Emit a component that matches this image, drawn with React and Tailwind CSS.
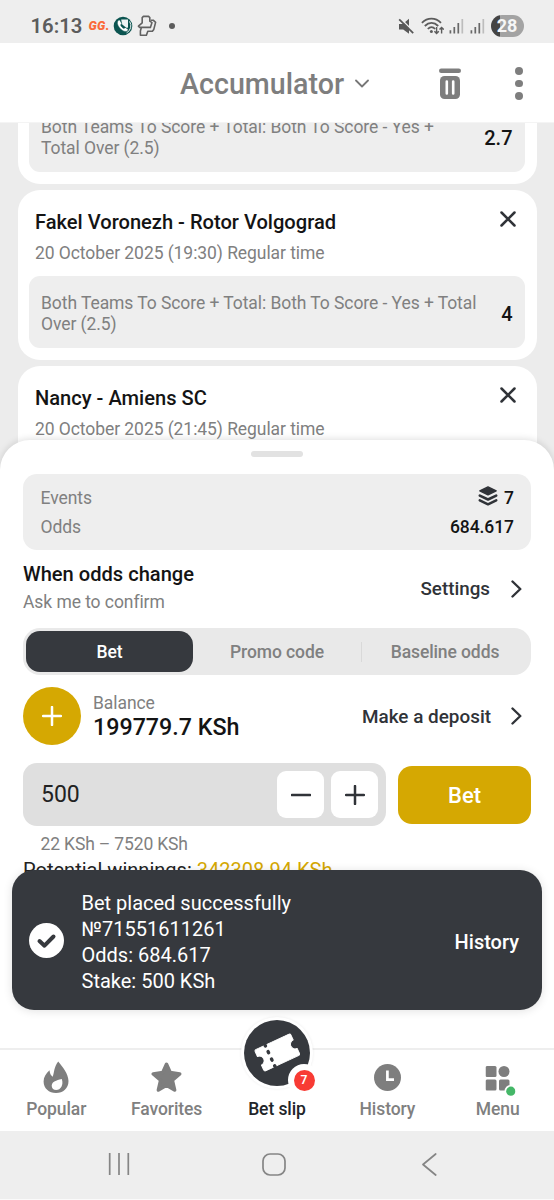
import React from "react";

function StatusBar() {
  return (
    <div className="flex h-[43px] shrink-0 items-center bg-[#eeeeee] pt-[9px] pl-[30.5px] pr-[30.5px] text-[#5c5c5c]">
      <span className="w-[50px] text-[20.3px] leading-6 font-semibold whitespace-nowrap">16:13</span>
      <span className="ml-[8px] w-[21.5px] text-[12.5px] leading-6 font-black italic tracking-[0.3px] whitespace-nowrap text-[#fa6a3a]">GG.</span>
      <svg className="ml-[3px] size-[20px]" viewBox="0 0 20 20">
        <circle cx="10" cy="10" r="9.3" fill="#0b5450" />
        <path d="M8.2 3.6H15V11.6L13.6 12L9 8.2Z" fill="#eef4f4" />
        <path d="M16.6 5.4A8 8 0 0 1 13.6 16.8" fill="none" stroke="#eef4f4" strokeWidth="1" />
        <path d="M5.2 4.6C3.8 6 4.1 8.5 6.1 11.2C8.3 14.2 11.3 16.1 13.9 15.2C14.8 14.8 15.4 13.9 15 13.3L12.7 11.7C12.1 11.4 11.5 12.2 10.9 12.5C9.5 12 7.9 10.2 7.6 8.9C8 8.3 8.8 8 8.6 7.2L7 4.5C6.5 3.9 5.7 4 5.2 4.6Z" fill="#fff" stroke="#0b5450" strokeWidth=".5" />
      </svg>
      <svg className="ml-[4px] h-[22px] w-[20px]" viewBox="0 0 20 22" fill="none" stroke="#626262" strokeWidth="1.6" strokeLinejoin="round" strokeLinecap="round">
        <path d="M6.4 1.4H11.6L12.8 2.6V6.2L15 7.6L13.4 12.4H2.6L1.4 11.2L5.2 7.8V2.6Z" />
        <path d="M14.2 5.2H16.2L18.6 7.4L16.8 14.4L15.4 16.2H10.8L9.4 20.2H3.4V16L4.2 13" />
      </svg>
      <span className="ml-[11.5px] size-[6px] rounded-full bg-[#5c5c5c]" />
      <div className="ml-auto flex items-center">
        <svg className="h-[17px] w-[16px]" viewBox="0 0 16 17">
          <path d="M1 6H4.8L11 .8V15.7L5.2 11.4H1Z" fill="#585858" />
          <path d="M1.4 -.6L16.3 14.4" stroke="#eeeeee" strokeWidth="1.6" />
          <path d="M1.2 1.4L15.2 15.2" stroke="#585858" strokeWidth="1.8" />
        </svg>
        <svg className="ml-[7px] h-[18px] w-[23px]" viewBox="0 0 23 18" fill="none" stroke="#5c5c5c" strokeWidth="1.8">
          <path d="M.9 5.8C6.5 .2 14.4 .2 20 5.8M3.8 9C8 4.8 13.1 4.8 17.2 9M6.8 12C9.2 9.5 11.8 9.5 14.2 12" />
          <circle cx="10.4" cy="14.5" r="1.5" fill="#5c5c5c" stroke="none" />
          <path d="M15.6 10V16.2M13.4 14.2L15.6 16.4L17.8 14.2M20.6 16.6V10.5M18.5 12.6L20.6 10.4L22.8 12.6" strokeWidth="1.4" />
        </svg>
        <Signal />
        <Signal />
        <div className="ml-[6px] flex h-[22px] w-[33px] items-center justify-center rounded-full bg-linear-to-r from-[#444444] from-28% to-[#a3a3a3] to-28%">
          <span className="text-[18px] leading-none font-bold text-[#f6f6f6]">28</span>
        </div>
      </div>
    </div>
  );
}

function Signal() {
  return (
    <svg className="ml-[5.5px] h-[16px] w-[15px]" viewBox="0 0 15 16">
      <path d="M1.4 12.2V15.5M5.3 9V15.5M9.3 5V15.5" stroke="#686868" strokeWidth="1.7" />
      <path d="M13.3 1V15.5" stroke="#bdbdbd" strokeWidth="1.7" />
    </svg>
  );
}

function Header() {
  return (
    <header className="relative z-10 flex h-[80px] shrink-0 items-center border-b border-[#f4f4f4] bg-white pt-[2px] pl-[180px] text-[#7e7e7e]">
      <h1 className="w-[164px] text-[28.65px] leading-9 font-medium whitespace-nowrap">Accumulator</h1>
      <svg className="ml-[11px] h-[10px] w-[14px]" viewBox="0 0 14 10" fill="none" stroke="#777" strokeWidth="1.8" strokeLinecap="round" strokeLinejoin="round">
        <path d="M1 1.5L7 7.5L13 1.5" />
      </svg>
      <svg className="ml-[70px] h-[32px] w-[22px]" viewBox="0 0 22 32">
        <rect x="0" y="0.5" width="22" height="4.5" rx="2.2" fill="#7e7e7e" />
        <rect x="1" y="8" width="20" height="23" rx="4.5" fill="#7e7e7e" />
        <path d="M7.8 13.5V25.5M14.2 13.5V25.5" stroke="#fff" strokeWidth="2.6" strokeLinecap="round" />
      </svg>
      <div className="ml-[54px] flex flex-col gap-[5px]">
        <span className="size-[7.5px] rounded-full bg-[#7e7e7e]" />
        <span className="size-[7.5px] rounded-full bg-[#7e7e7e]" />
        <span className="size-[7.5px] rounded-full bg-[#7e7e7e]" />
      </div>
    </header>
  );
}

function Market({ text, odds }) {
  return (
    <div className="flex h-[72px] shrink-0 items-center justify-between rounded-[11px] bg-[#eeeeee] pl-[12.5px] pr-[12px]">
      <p className="w-[440px] pt-[3px] text-[17.5px] leading-[20.5px] tracking-[-0.07px] whitespace-pre text-[#808080]">{text}</p>
      <span className="pt-[4px] text-[20px] leading-6 font-medium text-[#141414]">{odds}</span>
    </div>
  );
}

function EventCard({ title, date, children }) {
  return (
    <article className="h-[170px] shrink-0 rounded-[22px] bg-white pr-[12px] pl-[11px] pt-[20px]">
      <div className="flex justify-between pl-[6.5px] pr-[9px]">
        <h2 className="text-[20.1px] leading-6 font-medium whitespace-nowrap text-[#141414]">{title}</h2>
        <svg className="mt-[1px] size-[16px]" viewBox="0 0 16 16" stroke="#303338" strokeWidth="2.5" strokeLinecap="round">
          <path d="M1.5 1.5L14.5 14.5M14.5 1.5L1.5 14.5" />
        </svg>
      </div>
      <p className="mt-[8px] mb-[12px] pl-[6.5px] text-[17.5px] leading-[22px] tracking-[-0.07px] whitespace-nowrap text-[#808080]">{date}</p>
      {children}
    </article>
  );
}

function Chevron() {
  return (
    <svg className="h-[18px] w-[11px]" viewBox="0 0 11 18" fill="none" stroke="#303338" strokeWidth="2.4" strokeLinecap="round" strokeLinejoin="round">
      <path d="M1.5 1.5L9.3 9L1.5 16.5" />
    </svg>
  );
}

function Plus({ className }) {
  return (
    <svg className={className} viewBox="0 0 20 20" stroke="currentColor" strokeLinecap="round" strokeWidth="2.5">
      <path d="M10 1V19M1 10H19" />
    </svg>
  );
}

function BetPanel() {
  return (
    <section className="relative -mt-[31px] flex h-[608px] shrink-0 flex-col rounded-t-[30px] bg-white px-[23px] pt-[11px] shadow-[0_-1px_7px_rgba(0,0,0,0.13)]">
      <div className="h-[6px] w-[52px] shrink-0 self-center rounded-full bg-[#e2e2e2]" />
      <div className="mt-[17px] flex h-[76px] shrink-0 flex-col justify-center gap-[5px] rounded-[14px] bg-[#eeeeee] pt-px pr-[17px] pl-[17.5px] text-[17.5px] leading-6 tracking-[-0.07px]">
        <div className="flex items-center justify-between">
          <span className="text-[#808080]">Events</span>
          <span className="flex items-center gap-[6px] font-medium text-[#141414]">
            <svg className="h-[20px] w-[20px] -translate-y-[2px]" viewBox="0 0 20 20" fill="#303338">
              <path d="M10 .9L18.2 4.8L10 8.8L1.8 4.8Z" stroke="#303338" strokeLinejoin="round" strokeWidth="1.4" />
              <path d="M1.8 9.6L10 13.5L18.2 9.6M1.8 14.4L10 18.3L18.2 14.4" fill="none" stroke="#303338" strokeWidth="2.6" strokeLinejoin="round" strokeLinecap="round" />
            </svg>
            7
          </span>
        </div>
        <div className="flex items-center justify-between">
          <span className="text-[#808080]">Odds</span>
          <span className="font-medium text-[#141414]">684.617</span>
        </div>
      </div>

      <div className="mt-[12px] flex h-[54px] shrink-0 items-center pr-[9px]">
        <div className="-mt-[4px]">
          <h3 className="text-[20.1px] leading-6 font-medium text-[#141414]">When odds change</h3>
          <p className="mt-[5px] text-[17.5px] leading-[22px] tracking-[-0.07px] text-[#808080]">Ask me to confirm</p>
        </div>
        <span className="ml-auto mr-[21px] text-[18.8px] leading-6 font-medium text-[#303338]">Settings</span>
        <Chevron />
      </div>

      <div className="mt-[12px] flex h-[47px] shrink-0 rounded-[17px] bg-[#e9e9e9] p-[3px] text-[17.5px] font-medium tracking-[-0.1px] text-[#808080]">
        <div className="flex w-[167px] items-center justify-center rounded-[14px] bg-[#36393e] pt-px text-white">Bet</div>
        <div className="flex w-[168px] items-center justify-center pt-px">Promo code</div>
        <span className="h-[20px] w-px self-center bg-[#d9d9d9]" />
        <div className="flex w-[166px] items-center justify-center pt-px">Baseline odds</div>
      </div>

      <div className="mt-[12px] flex h-[58px] shrink-0 items-center pr-[9px]">
        <div className="flex size-[58px] items-center justify-center rounded-full bg-[#d5a802] text-white">
          <Plus className="size-[20px]" />
        </div>
        <div className="ml-[12px] -mt-px">
          <p className="text-[17.5px] leading-[22px] tracking-[-0.07px] text-[#808080]">Balance</p>
          <p className="text-[23.25px] leading-[26px] font-medium whitespace-nowrap text-[#141414]">199779.7 KSh</p>
        </div>
        <span className="ml-auto mr-[20px] pt-[2px] text-[18.9px] leading-6 font-medium text-[#303338]">Make a deposit</span>
        <Chevron />
      </div>

      <div className="mt-[18px] flex h-[63px] shrink-0 items-center">
        <div className="flex h-[63px] w-[363px] items-center rounded-[14px] bg-[#dfdfdf] pr-[8px] pl-[18px]">
          <span className="pt-[2px] text-[23px] text-[#222]">500</span>
          <div className="ml-auto flex gap-[7px] text-[#303338]">
            <div className="flex size-[47px] items-center justify-center rounded-[9px] bg-white">
              <svg className="size-[20px]" viewBox="0 0 20 20" stroke="currentColor" strokeWidth="2.6" strokeLinecap="round">
                <path d="M1 10H19" />
              </svg>
            </div>
            <div className="flex size-[47px] items-center justify-center rounded-[9px] bg-white">
              <Plus className="size-[20px]" />
            </div>
          </div>
        </div>
        <div className="ml-[12px] flex h-[58px] w-[133px] items-center justify-center rounded-[14px] bg-[#d5a802] pt-[2px] text-[22px] font-medium text-white">Bet</div>
      </div>
      <p className="mt-[7px] pl-[17.5px] text-[17.5px] leading-[22px] tracking-[-0.15px] whitespace-nowrap text-[#808080]">22 KSh – 7520 KSh</p>
      <p className="mt-[4px] text-[20.05px] leading-[22px] whitespace-nowrap text-[#222]">
        Potential winnings: <span className="text-[#d5a802]">342308.94 KSh</span>
      </p>
    </section>
  );
}

function Toast() {
  return (
    <div className="absolute top-[870px] left-[12px] flex h-[140px] w-[530px] items-center rounded-[22px] bg-[#36393e] pr-[23px] pl-[17px] text-white shadow-[0_1px_10px_rgba(0,0,0,0.12)]">
      <svg className="size-[35px]" viewBox="0 0 35 35">
        <circle cx="17.5" cy="17.5" r="17.5" fill="#fff" />
        <path d="M10.5 18L15.5 22.7L24.5 13.5" fill="none" stroke="#36393e" strokeWidth="4" strokeLinecap="round" strokeLinejoin="round" />
      </svg>
      <div className="ml-[17.5px] mt-[3px] text-[20px] leading-[26px] whitespace-nowrap">
        <p>Bet placed successfully</p>
        <p>№71551611261</p>
        <p>Odds: 684.617</p>
        <p>Stake: 500 KSh</p>
      </div>
      <span className="ml-auto mt-[3px] text-[20px] font-medium">History</span>
    </div>
  );
}

function Tab({ label, active, children }) {
  return (
    <div className="flex w-[110.4px] flex-col items-center">
      <div className="flex h-[32px] items-center justify-center">{children}</div>
      <span className={active ? "mt-[5px] text-[17.5px] leading-6 font-medium tracking-[-0.08px] whitespace-nowrap text-[#222529]" : "mt-[5px] text-[17.5px] leading-6 font-medium tracking-[-0.08px] whitespace-nowrap text-[#808080]"}>{label}</span>
    </div>
  );
}

function BottomNav() {
  return (
    <nav className="relative flex h-[83px] shrink-0 justify-center border-t-2 border-[#eeeeee] bg-white pt-[10px]">
      <Tab label="Popular">
        <svg className="h-[32px] w-[26px] translate-y-px" viewBox="0 0 26 32" fill="#7e7e7e">
          <path fillRule="evenodd" d="M15.2 .4C19.4 5.6 25.5 12.7 25.5 20C25.5 27.4 20 32 13 32C6 32 .6 27.4 .6 20.5C.6 16.2 3 12.6 6.5 9.3C6.8 12.3 7.7 14.5 9.7 15.8C11.4 10.8 11 5.7 15.2 .4ZM18.8 18C17 18.7 8.7 19.4 8.7 24.8C8.7 27.6 10.7 29 13.2 29C17.7 29 20.8 24 18.8 18Z" />
        </svg>
      </Tab>
      <Tab label="Favorites">
        <svg className="h-[30px] w-[31px] translate-y-px" viewBox="0 0 31 30" fill="#7e7e7e" stroke="#7e7e7e" strokeWidth="3.5" strokeLinejoin="round">
          <path d="M15.5 2.3L19.2 10.5L28.7 12L21.4 18.3L23.6 28L15.5 23.3L7.4 28L9.6 18.3L2.3 12L11.8 10.5Z" />
        </svg>
      </Tab>
      <Tab label="Bet slip" active>
        <span />
      </Tab>
      <Tab label="History">
        <svg className="size-[27px] translate-y-px" viewBox="0 0 27 27">
          <circle cx="13.5" cy="13.5" r="13.5" fill="#7e7e7e" />
          <path d="M13.4 6.4V15.6H20" fill="none" stroke="#fff" strokeWidth="2.7" />
        </svg>
      </Tab>
      <Tab label="Menu">
        <svg className="h-[30px] w-[30px] translate-x-[2.5px] translate-y-[5px]" viewBox="0 0 30 30" fill="#7e7e7e">
          <rect x="0" y="0" width="11" height="11" rx="1.5" />
          <circle cx="18.5" cy="5.5" r="5.5" />
          <rect x="0" y="13.5" width="11" height="11" rx="1.5" />
          <rect x="13.5" y="13.5" width="10.5" height="11" rx="1.5" />
          <circle cx="25.3" cy="25.2" r="6.3" fill="#fff" />
          <circle cx="25.3" cy="25.2" r="4.6" fill="#45b768" />
        </svg>
      </Tab>
      <div className="absolute top-[-33px] left-[241px] size-[72px] rounded-full bg-white p-[3px] shadow-[0_0_3px_rgba(0,0,0,0.08)]">
        <svg className="size-[66px]" viewBox="0 0 66 66">
          <circle cx="33" cy="33" r="33" fill="#36393e" />
          <g transform="translate(33.3 32.5) rotate(-25) scale(.94)">
            <path d="M-19 -12.5H19Q21 -12.5 21 -10.5V-5A5 5 0 0 0 21 5V10.5Q21 12.5 19 12.5H-19Q-21 12.5 -21 10.5V5A5 5 0 0 0 -21 -5V-10.5Q-21 -12.5 -19 -12.5Z" fill="#fff" stroke="#fff" strokeWidth="1" strokeLinejoin="round" />
            <path d="M-8.5 -12.5V-11.5M-8.5 -5V-3.6M-8.5 3.6V5M-8.5 11.5V12.5" stroke="#36393e" strokeWidth="3.6" strokeLinecap="round" />
          </g>
        </svg>
      </div>
      <div className="absolute top-[14px] left-[288px] flex size-[32px] items-center justify-center rounded-full bg-white">
        <div className="flex size-[21px] items-center justify-center rounded-full bg-[#f83b34] text-[12px] leading-none font-semibold text-white">7</div>
      </div>
    </nav>
  );
}

function SystemNav() {
  return (
    <div className="flex h-[68px] shrink-0 items-center bg-[#eeeeee] pb-[2px] pl-[108px]">
      <svg className="h-[22px] w-[22px]" viewBox="0 0 22 22" stroke="#858585" strokeWidth="1.7">
        <path d="M1.7 0V22M11 0V22M20.3 0V22" />
      </svg>
      <svg className="ml-[132px] h-[23px] w-[24px]" viewBox="0 0 24 23" fill="none" stroke="#858585" strokeWidth="1.7">
        <rect x="1" y="1" width="22" height="21" rx="7" />
      </svg>
      <svg className="ml-[136px] h-[23px] w-[15px]" viewBox="0 0 15 23" fill="none" stroke="#858585" strokeWidth="1.7" strokeLinecap="round" strokeLinejoin="round">
        <path d="M13.7 1L1 11.5L13.7 22" />
      </svg>
    </div>
  );
}

export default function App() {
  return (
    <div className="relative flex h-[1200px] w-[554px] flex-col overflow-hidden bg-[#fafafa] font-['Roboto','Noto_Sans',sans-serif]">
      <StatusBar />
      <Header />
      <main className="flex h-[348px] shrink-0 flex-col gap-[6px] overflow-hidden bg-[#ececec] px-[17.5px]">
        <article className="flex h-[61px] shrink-0 flex-col justify-end rounded-b-[22px] bg-white pr-[12px] pb-[12px] pl-[11px]">
          <Market text={"Both Teams To Score + Total: Both To Score - Yes +\nTotal Over (2.5)"} odds="2.7" />
        </article>
        <EventCard title="Fakel Voronezh - Rotor Volgograd" date="20 October 2025 (19:30) Regular time">
          <Market text={"Both Teams To Score + Total: Both To Score - Yes + Total\nOver (2.5)"} odds="4" />
        </EventCard>
        <EventCard title="Nancy - Amiens SC" date="20 October 2025 (21:45) Regular time" />
      </main>
      <BetPanel />
      <BottomNav />
      <SystemNav />
      <Toast />
    </div>
  );
}
